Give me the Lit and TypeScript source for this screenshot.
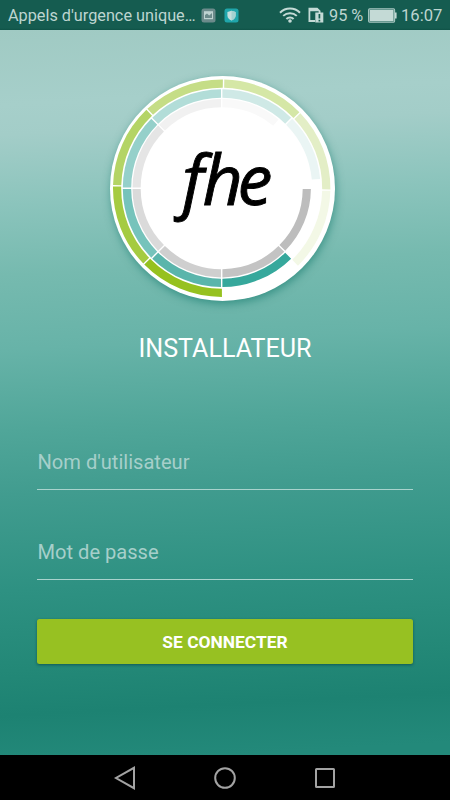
import { LitElement, html, svg, css } from "lit";
import { customElement } from "lit/decorators.js";

type Ring = { inner: number; outer: number; stops: number[]; colors: string[] };

const rings: Ring[] = [
  {
    inner: 100.5, outer: 108.7,
    stops: [89.5, 135.8, 181.3, 226.5, 271, 316, 361, 405.8],
    colors: ["#96c11f", "#a5cb41", "#b4d465", "#c5dd86", "#d5e7a6", "#e3eec6", "#f3f8e6"],
  },
  {
    inner: 90.5, outer: 98.9,
    stops: [45, 90, 135, 180, 225, 270, 315, 355],
    colors: ["#36a89c", "#5ab5ab", "#76c3bb", "#95d0ca", "#b2ddd8", "#cfe9e6", "#eaf5f4"],
  },
  {
    inner: 81, outer: 89.2,
    stops: [0, 45, 90, 135, 180, 225, 270, 310],
    colors: ["#bdbdbd", "#c3c3c3", "#cfcfcf", "#dadada", "#e5e5e5", "#f1f1f1", "#f9f9f9"],
  },
];

const CX = 111.7;
const CY = 112.2;

function arc(inner: number, outer: number, from: number, to: number) {
  const point = (r: number, deg: number, shift: number) => {
    const a = (deg * Math.PI) / 180 + shift / r;
    return `${(CX + r * Math.cos(a)).toFixed(2)} ${(CY + r * Math.sin(a)).toFixed(2)}`;
  };
  const gap = 0.7;
  return `M${point(outer, from, gap)}A${outer} ${outer} 0 0 1 ${point(outer, to, -gap)}L${point(inner, to, -gap)}A${inner} ${inner} 0 0 0 ${point(inner, from, gap)}Z`;
}

@customElement("fhe-logo")
export class FheLogo extends LitElement {
  static styles = css`
    :host { display: block; width: 225px; height: 225px; border-radius: 50%; background: #fff;
      box-shadow: 1px 3px 9px rgba(0, 110, 95, 0.5); }
    svg { display: block; }
    text { font: italic 70px "Open Sans", sans-serif; fill: #000; stroke: #000; stroke-width: 0.9px; }
  `;
  render() {
    return html`<svg width="225" height="225" viewBox="0 0 225 225">
      ${rings.map((r) => r.colors.map((c, i) => svg`<path d=${arc(r.inner, r.outer, r.stops[i], r.stops[i + 1])} fill=${c} />`))}
      <text x="72 92.5 127.5" y="128.5">fhe</text>
    </svg>`;
  }
}

@customElement("status-bar")
export class StatusBar extends LitElement {
  static styles = css`
    :host { display: flex; align-items: center; height: 30px; box-sizing: border-box; padding: 0 8px;
      background: linear-gradient(#155c50 28px, #0f5247 30px); color: #bdd5d0; font: 16.3px/30px Roboto, sans-serif; }
    .carrier { width: 188px; white-space: nowrap; font-size: 16.25px; padding-top: 1px; }
    .app { margin-left: 5px; }
    .shield { margin-left: 8px; }
    .wifi { margin-left: auto; }
    .sim { margin-left: 7px; }
    .percent { width: 35px; margin-left: 5px; white-space: nowrap; padding-top: 1px; }
    .battery { margin-left: 4px; }
    .clock { width: 41px; margin-left: 4px; font-size: 16.6px; padding-top: 1px; }
    svg { flex: none; display: block; }
  `;
  render() {
    return html`
      <span class="carrier">Appels d'urgence unique…</span>
      <svg class="app" width="15" height="15" viewBox="0 0 15 15">
        <rect x="0.5" y="0.5" width="14" height="14" rx="2.5" fill="#6c8b8b" />
        <path d="M3 3.2h9v8H3z" fill="#bfd3d1" />
        <path d="M4 10V7l2-1.5 2.2 2L11 5v5z" fill="#6c8b8b" />
      </svg>
      <svg class="shield" width="15" height="15" viewBox="0 0 15 15">
        <rect x="0.5" y="0.5" width="14" height="14" rx="2.5" fill="#20a6ab" />
        <path d="M7.5 2.8 11.6 4v3.5c0 2.4-1.8 4-4.1 5-2.3-1-4.1-2.6-4.1-5V4z" fill="#c4dfdd" />
        <path d="M7.5 2.8 11.6 4v3.5c0 2.4-1.8 4-4.1 5z" fill="#a3d2d1" />
      </svg>
      <svg class="wifi" width="22" height="16" viewBox="0 0 22 16">
        <g fill="none" stroke="#c4dad6" stroke-width="2">
          <path d="M1 5.7C6.5.2 15.5.2 21 5.7" />
          <path d="M4.2 8.9c3.8-3.7 9.8-3.7 13.6 0" />
          <path d="M7.4 12c2-2 5.2-2 7.2 0" />
        </g>
        <circle cx="11" cy="14" r="1.8" fill="#c4dad6" />
      </svg>
      <svg class="sim" width="16" height="16" viewBox="0 0 16 16">
        <path d="M7 14H1.4V1.6h7.6l2.6 2.6V6" fill="none" stroke="#c4dad6" stroke-width="1.8" />
        <path d="M1.4 1.6h7.6l2.6 2.6H1.4z" fill="#c4dad6" />
        <rect x="7.3" y="5.5" width="8" height="10" fill="#c4dad6" />
        <path d="M11.4 7v4.5M11.4 12.7v1.8" stroke="#155c50" stroke-width="1.7" />
      </svg>
      <span class="percent">95 %</span>
      <svg class="battery" width="29" height="15" viewBox="0 0 29 15">
        <rect x="0.6" y="0.9" width="26" height="13.2" rx="1" fill="none" stroke="#a9c7c2" stroke-width="1.1" />
        <rect x="1.6" y="1.9" width="24" height="11.2" fill="#c4dad6" />
        <path d="M27 4.5h1.6v6H27z" fill="#c4dad6" />
      </svg>
      <span class="clock">16:07</span>
    `;
  }
}

@customElement("nav-bar")
export class NavBar extends LitElement {
  static styles = css`
    :host { display: flex; justify-content: center; align-items: center; gap: 76px; height: 45px; background: #000; }
    svg { display: block; fill: none; stroke: #a3a3a3; stroke-width: 2; }
  `;
  render() {
    return html`
      <svg width="24" height="24" viewBox="0 0 24 24"><path d="M21 1.8v20.4L3 12z" /></svg>
      <svg width="24" height="24" viewBox="0 0 24 24"><circle cx="12" cy="12" r="9.8" /></svg>
      <svg width="24" height="24" viewBox="0 0 24 24"><rect x="3" y="3" width="18" height="18" rx="0.5" /></svg>
    `;
  }
}

@customElement("app-root")
export class AppRoot extends LitElement {
  static styles = css`
    :host { display: flex; flex-direction: column; width: 450px; height: 800px; overflow: hidden; font-family: Roboto, sans-serif; }
    .screen { flex: 1; display: flex; flex-direction: column; box-sizing: border-box; padding: 46px 37px 0; color: #fff;
      background: linear-gradient(177deg, #a0cac3 0, #a6cfca 75px, #a3cdc8 105px, #8bc4bc 175px, #76baaf 245px, #67b3a8 320px,
        #50a699 400px, #419c8f 465px, #2e9182 560px, #238877 640px, #1d8272 685px, #23897a 735px); }
    .logo { margin-left: 73px; }
    h1 { margin: 33px 0 0; font-weight: 400; font-size: 25.1px; line-height: 30px; text-align: center; }
    .field { height: 30px; padding: 0 0 11px 0.5px; border-bottom: 1px solid #a9d3cd; color: #a6cfca; font-size: 20.1px; line-height: 28px; }
    .user { margin-top: 84px; }
    .password { margin-top: 48px; }
    button { margin: 39px 0 0; width: 376px; height: 45px; padding: 1px 0 0; border: 0; border-radius: 2.5px; background: #97c122; color: #fff;
      font: 700 17.4px Roboto, sans-serif; box-shadow: 0 1px 3px rgba(0, 50, 60, 0.55); }
  `;
  render() {
    return html`
      <status-bar></status-bar>
      <main class="screen">
        <fhe-logo class="logo"></fhe-logo>
        <h1>INSTALLATEUR</h1>
        <div class="field user">Nom d'utilisateur</div>
        <div class="field password">Mot de passe</div>
        <button>SE CONNECTER</button>
      </main>
      <nav-bar></nav-bar>
    `;
  }
}
